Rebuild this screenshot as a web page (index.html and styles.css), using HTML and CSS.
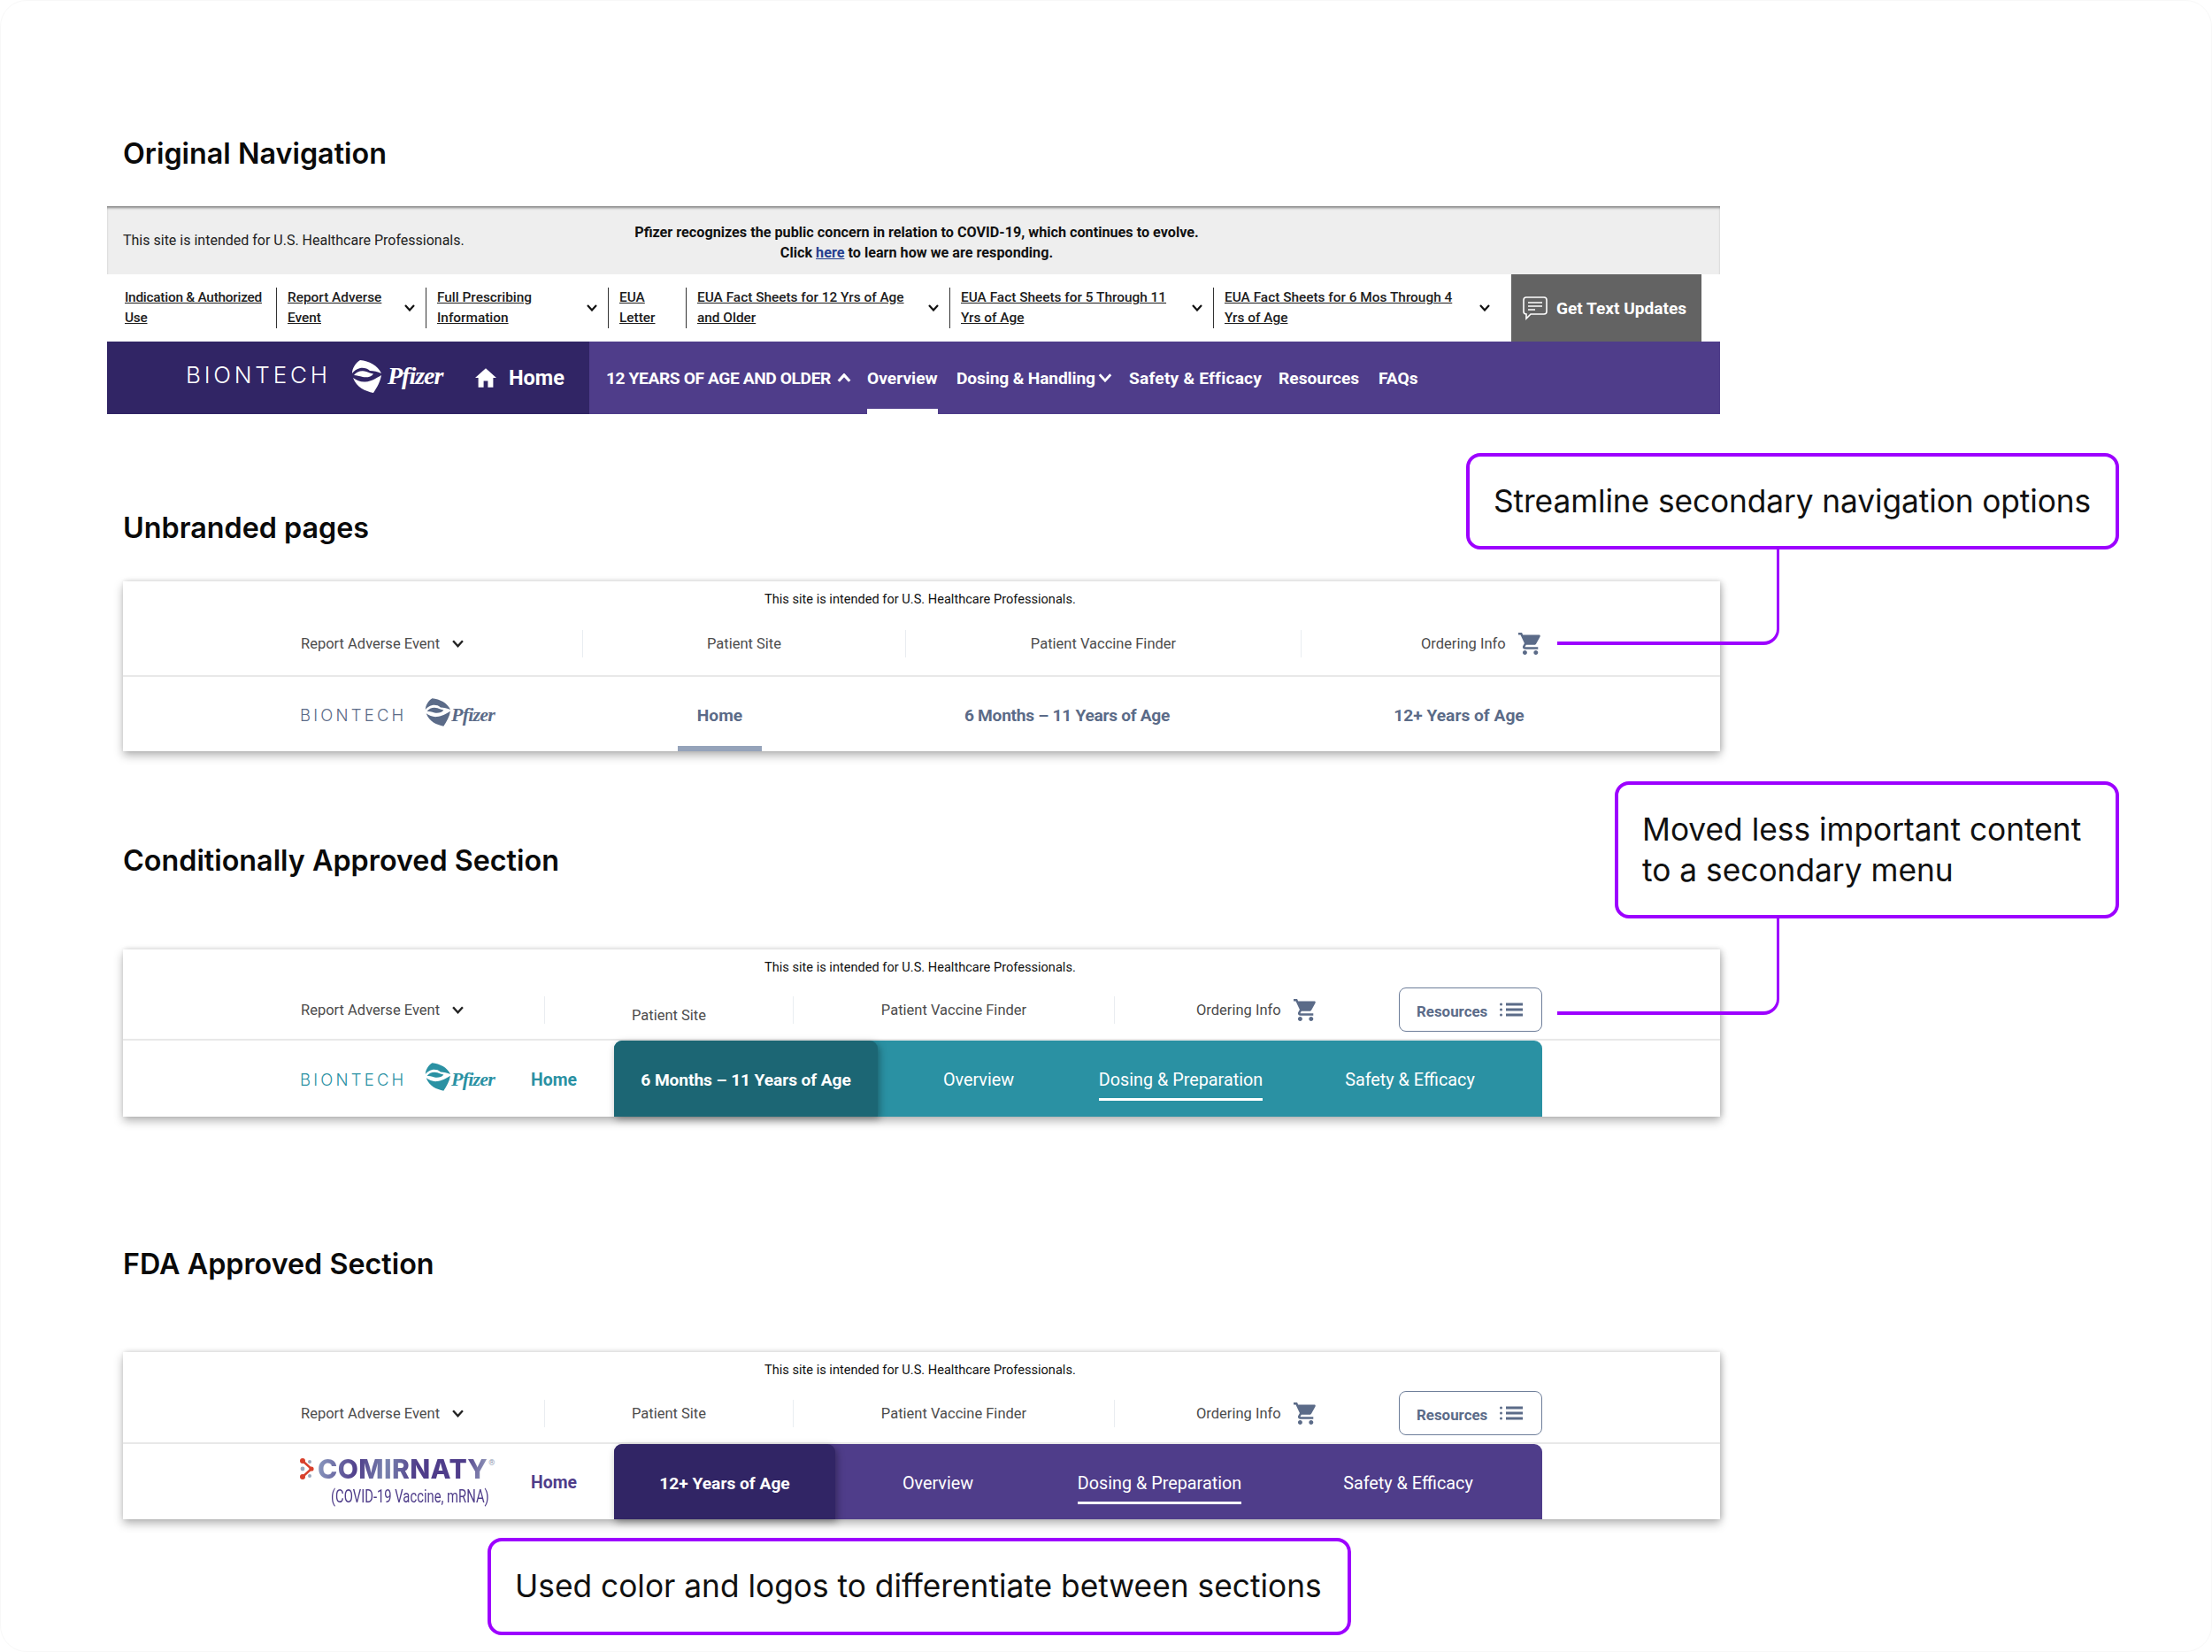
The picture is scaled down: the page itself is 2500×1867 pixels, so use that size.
FILE: index.html
```html
<!DOCTYPE html>
<html lang="en">
<head>
<meta charset="utf-8">
<title>Navigation comparison</title>
<link rel="stylesheet" href="styles.css">
</head>
<body>
<svg class="defs" width="0" height="0" aria-hidden="true">
  <symbol id="swirl" viewBox="0 0 34 37">
    <path d="M10 0C20 1 30 6 34 15C30 13 25 12 21 12C18 9 14 8.500 10 9C6 10 3 12 1 15C1 9 5 3 10 0Z"/>
    <path d="M3 17C6 13 12 11 17 13C20 14 22 15 25 15.500C23 19 17 20 13 19C9 18 6 17 3 17Z"/>
    <path d="M34 17C33 24 29 31 25 37C16 35 6 31 2 20C6 23 11 25 16 24.500C23 24 29 20 34 17Z"/>
  </symbol>
  <symbol id="cart" viewBox="1 2 21 20">
    <path d="M7 18c-1.100 0-1.990.900-1.990 2S5.900 22 7 22s2-.900 2-2-.900-2-2-2zM1 2v2h2l3.600 7.590-1.350 2.450c-.160.280-.250.610-.250.960 0 1.100.900 2 2 2h12v-2H7.420c-.140 0-.250-.110-.250-.250l.030-.120.900-1.630h7.450c.750 0 1.410-.410 1.750-1.030l3.580-6.490c.080-.140.120-.310.120-.480 0-.550-.450-1-1-1H5.210l-.940-2H1zm16 16c-1.100 0-1.990.900-1.990 2s.890 2 1.990 2 2-.900 2-2-.900-2-2-2z"/>
  </symbol>
  <symbol id="list" viewBox="0 0 26 16">
    <circle cx="1.500" cy="2" r="1.500"/><circle cx="1.500" cy="8" r="1.500"/><circle cx="1.500" cy="14" r="1.500"/>
    <rect x="7" y="0.500" width="19" height="3"/><rect x="7" y="6.500" width="19" height="3"/><rect x="7" y="12.500" width="19" height="3"/>
  </symbol>
  <symbol id="chev" viewBox="0 0 12 8">
    <polyline points="1,1 6,6.500 11,1" fill="none" stroke="currentColor" stroke-width="2.200"/>
  </symbol>
  <symbol id="chev-up" viewBox="0 0 12 8">
    <polyline points="1,7 6,1.500 11,7" fill="none" stroke="currentColor" stroke-width="2.600"/>
  </symbol>
</svg>

<main class="page">
  <h2 class="title title-first">Original Navigation</h2>
  <section class="orig">
    <div class="orig-top">
      <p class="orig-intended">This site is intended for U.S. Healthcare Professionals.</p>
      <p class="orig-alert">Pfizer recognizes the public concern in relation to COVID-19, which continues to evolve.<br>Click <a class="orig-here">here</a> to learn how we are responding.</p>
    </div>
    <div class="orig-links">
      <div class="olink olink-first"><a>Indication &amp; Authorized<br>Use</a></div>
      <div class="olink"><a>Report Adverse<br>Event</a><svg class="olink-chev"><use href="#chev"/></svg></div>
      <div class="olink"><a>Full Prescribing<br>Information</a><svg class="olink-chev"><use href="#chev"/></svg></div>
      <div class="olink"><a>EUA<br>Letter</a></div>
      <div class="olink"><a>EUA Fact Sheets for 12 Yrs of Age<br>and Older</a><svg class="olink-chev"><use href="#chev"/></svg></div>
      <div class="olink"><a>EUA Fact Sheets for 5 Through 11<br>Yrs of Age</a><svg class="olink-chev"><use href="#chev"/></svg></div>
      <div class="olink olink-last"><a>EUA Fact Sheets for 6 Mos Through 4<br>Yrs of Age</a><svg class="olink-chev"><use href="#chev"/></svg></div>
      <div class="otext">
        <svg class="otext-icon" viewBox="0 0 28 28" fill="none" stroke="currentColor" stroke-width="1.600"><path d="M4 2h20a3 3 0 0 1 3 3v13a3 3 0 0 1-3 3H9l-5 5v-5a3 3 0 0 1-3-3V5a3 3 0 0 1 3-3z"/><path d="M6 8h16M6 12h16M6 16h8"/></svg>
        <span>Get Text Updates</span>
      </div>
    </div>
    <div class="orig-main">
      <div class="orig-brand">
        <span class="bio bio-lg">BIONTECH</span>
        <svg class="swirl-lg"><use href="#swirl"/></svg>
        <span class="pfizer pfizer-lg">Pfizer</span>
        <svg class="home-icon" viewBox="2 3 20 18"><path d="M12 3 2 12h3v9h5v-6h4v6h5v-9h3z"/></svg>
        <span class="orig-home">Home</span>
      </div>
      <nav class="orig-nav">
        <span class="onav-item onav-caps">12 YEARS OF AGE AND OLDER<svg class="onav-chev"><use href="#chev-up"/></svg></span>
        <span class="onav-item onav-on">Overview</span>
        <span class="onav-item onav-dose">Dosing &amp; Handling<svg class="onav-chev"><use href="#chev"/></svg></span>
        <span class="onav-item onav-safety">Safety &amp; Efficacy</span>
        <span class="onav-item">Resources</span>
        <span class="onav-item">FAQs</span>
      </nav>
    </div>
  </section>

  <h2 class="title title-unbranded">Unbranded pages</h2>
  <section class="card card-unbranded">
    <p class="notice">This site is intended for U.S. Healthcare Professionals.</p>
    <div class="util util-unbranded">
      <div class="ucell ucell-report">Report Adverse Event<svg class="ucell-chev"><use href="#chev"/></svg></div>
      <div class="ucell ucell-mid">Patient Site</div>
      <div class="ucell ucell-mid">Patient Vaccine Finder</div>
      <div class="ucell ucell-order">Ordering Info<svg class="cart"><use href="#cart"/></svg></div>
    </div>
    <div class="main main-unbranded">
      <div class="logo">
        <span class="bio bio-sm">BIONTECH</span>
        <svg class="swirl-sm"><use href="#swirl"/></svg>
        <span class="pfizer pfizer-sm">Pfizer</span>
      </div>
      <span class="ub-link ub-home">Home</span>
      <span class="ub-link ub-long">6 Months – 11 Years of Age</span>
      <span class="ub-link">12+ Years of Age</span>
    </div>
  </section>

  <h2 class="title title-cond">Conditionally Approved Section</h2>
  <section class="card card-sub">
    <p class="notice">This site is intended for U.S. Healthcare Professionals.</p>
    <div class="util util-sub">
      <div class="ucell ucell-report">Report Adverse Event<svg class="ucell-chev"><use href="#chev"/></svg></div>
      <div class="ucell ucell-mid ucell-low">Patient Site</div>
      <div class="ucell ucell-mid">Patient Vaccine Finder</div>
      <div class="ucell ucell-order-sub">Ordering Info<svg class="cart"><use href="#cart"/></svg></div>
      <div class="res">Resources<svg class="res-icon"><use href="#list"/></svg></div>
    </div>
    <div class="main main-sub teal">
      <div class="logo logo-sub">
        <span class="bio bio-sm">BIONTECH</span>
        <svg class="swirl-sm"><use href="#swirl"/></svg>
        <span class="pfizer pfizer-sm">Pfizer</span>
      </div>
      <span class="sub-home">Home</span>
      <nav class="bar bar-teal">
        <span class="tab tab-active">6 Months – 11 Years of Age</span>
        <span class="tab">Overview</span>
        <span class="tab"><span class="tab-on">Dosing &amp; Preparation</span></span>
        <span class="tab">Safety &amp; Efficacy</span>
      </nav>
    </div>
  </section>

  <h2 class="title title-fda">FDA Approved Section</h2>
  <section class="card card-sub card-fda">
    <p class="notice">This site is intended for U.S. Healthcare Professionals.</p>
    <div class="util util-sub">
      <div class="ucell ucell-report">Report Adverse Event<svg class="ucell-chev"><use href="#chev"/></svg></div>
      <div class="ucell ucell-mid">Patient Site</div>
      <div class="ucell ucell-mid">Patient Vaccine Finder</div>
      <div class="ucell ucell-order-sub">Ordering Info<svg class="cart"><use href="#cart"/></svg></div>
      <div class="res">Resources<svg class="res-icon"><use href="#list"/></svg></div>
    </div>
    <div class="main main-sub purple">
      <div class="cmr">
        <div class="cmr-top">
          <svg class="cmr-icon" viewBox="0 0 16 24">
            <path d="M3 3 13 12 3 21" fill="none" stroke="#d8402c" stroke-width="2.400"/>
            <circle cx="3" cy="3" r="3" fill="#d8402c"/><circle cx="3" cy="21" r="3" fill="#d8402c"/><circle cx="13" cy="12" r="2.600" fill="#d8402c"/>
            <circle cx="11" cy="4" r="2" fill="#9aa8bd"/><circle cx="3" cy="12" r="2.400" fill="#9aa8bd"/><circle cx="11" cy="20" r="2" fill="#9aa8bd"/>
          </svg>
          <span class="cmr-name">COMIRNATY</span><span class="cmr-reg">®</span>
        </div>
        <span class="cmr-sub">(COVID-19 Vaccine, mRNA)</span>
      </div>
      <span class="sub-home">Home</span>
      <nav class="bar bar-purple">
        <span class="tab tab-active">12+ Years of Age</span>
        <span class="tab">Overview</span>
        <span class="tab"><span class="tab-on">Dosing &amp; Preparation</span></span>
        <span class="tab">Safety &amp; Efficacy</span>
      </nav>
    </div>
  </section>

  <div class="callout callout-stream">Streamline secondary navigation options</div>
  <div class="callout callout-moved">Moved less important content<br>to a secondary menu</div>
  <div class="callout callout-color">Used color and logos to differentiate between sections</div>
  <div class="conn conn-stream"></div>
  <div class="conn conn-moved"></div>
</main>
</body>
</html>
```

FILE: styles.css
```css
* { box-sizing: border-box; }
html, body { margin: 0; background: #fff; }
.defs { position: absolute; }
p, h2 { margin: 0; }
svg { display: block; fill: currentColor; }

.page {
  position: relative;
  width: 2500px;
  height: 1867px;
  padding-top: 153px;
  border: 1px solid #f8f8f8;
  border-radius: 30px;
  overflow: hidden;
  font-family: Roboto, "Liberation Sans", sans-serif;
  color: #000;
}

.title {
  margin-left: 138px;
  font: 600 32.300px/40px Inter, "Liberation Sans", sans-serif;
  color: #0a0a0a;
}
.title-first { margin-bottom: 39px; }
.title-unbranded { margin-top: 109px; margin-bottom: 40px; }
.title-cond { margin-top: 104px; margin-bottom: 80px; }
.title-fda { margin-top: 147px; margin-bottom: 79px; }

/* original navigation */
.orig { margin-left: 120px; width: 1823px; }
.orig-top {
  display: grid;
  grid-template-columns: 591px 638px;
  align-items: center;
  height: 77px;
  padding-left: 18px;
  background: #eeeeee;
  box-shadow: inset 0 3px 3px -1px rgba(0, 0, 0, .45);
}
.orig-intended { font-size: 16px; color: #222; white-space: nowrap; }
.orig-alert {
  margin-left: -26px;
  padding-top: 5px;
  font-size: 16.200px;
  line-height: 23px;
  font-weight: 700;
  text-align: center;
  white-space: nowrap;
  color: #111;
}
.orig-here { color: #26408f; text-decoration: underline; }

.orig-links {
  display: grid;
  grid-template-columns: 191px 169px 206px 88px 298px 298px 337px 215px 21px;
  align-items: center;
  height: 76px;
}
.olink {
  display: flex;
  align-items: center;
  justify-content: space-between;
  height: 46px;
  padding: 0 12px;
  border-left: 1.500px solid #333;
  font-size: 15.400px;
  line-height: 23px;
  font-weight: 500;
  color: #1c1c1c;
  white-space: nowrap;
}
.olink a { text-decoration: underline; }
.olink-first { padding-left: 20px; border-left: 0; letter-spacing: -.25px; }
.olink-last { padding-right: 24px; }
.olink-chev { width: 12px; height: 8px; flex: none; color: #111; }
.otext {
  display: flex;
  align-items: center;
  gap: 10px;
  align-self: stretch;
  padding-left: 13px;
  background: #636363;
  color: #fff;
  font-size: 19.100px;
  font-weight: 700;
  white-space: nowrap;
}
.otext-icon { width: 28px; height: 28px; fill: none; flex: none; }

.orig-main { display: flex; height: 82px; }
.orig-brand {
  display: grid;
  grid-template-columns: 187px 41px 99px 38px auto;
  align-items: center;
  width: 545px;
  padding-left: 89px;
  background: #312565;
  color: #fff;
}
.bio { font-family: Inter, "Liberation Sans", sans-serif; font-weight: 300; white-space: nowrap; line-height: 1; }
.bio-lg { font-size: 26px; letter-spacing: 3.800px; margin-top: -7px; }
.bio-sm { font-size: 18.500px; letter-spacing: 3.200px; margin-top: 3px; }
.pfizer { font-family: "Liberation Serif", serif; font-style: italic; font-weight: 700; white-space: nowrap; line-height: 1; }
.pfizer-lg { font-size: 28px; letter-spacing: -1px; margin-top: -4px; }
.pfizer-sm { font-size: 22px; letter-spacing: -.8px; margin-top: 2px; }
.swirl-lg { width: 34px; height: 37px; margin-top: -4px; }
.swirl-sm { width: 29px; height: 32px; margin-top: -4px; }
.home-icon { width: 24px; height: 24px; }
.orig-home { font-size: 23.500px; font-weight: 700; }
.orig-nav {
  display: grid;
  grid-template-columns: 295px 101px 195px 169px 113px auto;
  flex: 1;
  padding-left: 19px;
  background: #4f3d8a;
  color: #fff;
  font-size: 19.200px;
  font-weight: 700;
  white-space: nowrap;
}
.onav-item { display: flex; align-items: center; gap: 7px; }
.onav-caps { letter-spacing: -.4px; }
.onav-dose { gap: 3px; letter-spacing: -.15px; }
.onav-safety { letter-spacing: .2px; }
.onav-chev { width: 16px; height: 10px; }
.onav-on { width: 80px; border-bottom: 6px solid #fff; border-top: 6px solid transparent; }

/* redesign cards */
.card {
  display: flex;
  flex-direction: column;
  margin-left: 138px;
  width: 1805px;
  background: #fff;
  box-shadow: 0 5px 10px rgba(0, 0, 0, .28), 3px 0 6px rgba(0, 0, 0, .1), 0 -1px 4px rgba(0, 0, 0, .05);
}
.card-unbranded { height: 192px; }
.card-sub { height: 189px; }
.notice { height: 41px; padding-left: 725px; font-size: 14.600px; line-height: 41px; color: #111; white-space: nowrap; }
.util {
  display: grid;
  align-items: start;
  border-bottom: 2px solid #e8e8e8;
  font-size: 16.500px;
  color: #4c4c4c;
  white-space: nowrap;
}
.util-unbranded { grid-template-columns: 519px 365px 447px 406px; height: 67px; padding-top: 14px; }
.util-sub { grid-template-columns: 476px 281px 363px 322px 162px; height: 62px; padding-top: 12px; }
.card-fda .util-sub { height: 63px; padding-top: 13px; }
.ucell { display: flex; align-items: center; height: 31px; }
.ucell-report { padding-left: 201px; }
.ucell-mid { justify-content: center; border-left: 1px solid #e9edf1; }
.ucell-low { padding-top: 12px; }
.ucell-order { padding-left: 135px; border-left: 1px solid #e9edf1; }
.ucell-order-sub { padding-left: 92px; border-left: 1px solid #e9edf1; }
.ucell-chev { width: 13px; height: 9px; margin-left: 14px; color: #222; }
.cart { width: 26px; height: 25px; margin-left: 14px; color: #5b6b88; flex: none; }
.res {
  display: flex;
  align-items: center;
  justify-content: space-between;
  height: 50px;
  margin-top: -10px;
  padding: 3px 21px 0 19px;
  border: 1.500px solid #6d7d99;
  border-radius: 8px;
  color: #5b6b88;
  font-size: 16.900px;
  font-weight: 700;
}
.res-icon { width: 26px; height: 16px; margin-top: -3px; }

.main { flex: 1; display: flex; align-items: stretch; }
.logo {
  display: grid;
  grid-template-columns: 141px 30px auto;
  align-items: center;
}
.main-unbranded { display: grid; grid-template-columns: 427px 95px 690px 196px; padding-left: 200px; color: #5b6b88; }
.ub-link { display: flex; align-items: center; justify-content: center; padding-top: 2px; font-size: 19.200px; font-weight: 700; white-space: nowrap; }
.ub-long { letter-spacing: -.3px; }
.ub-home { padding-top: 9px; border-bottom: 6px solid #95a3ba; }
.main-sub { display: grid; grid-template-columns: 261px 94px 1049px; padding-left: 200px; }
.teal { color: #2a91a3; }
.purple { color: #4f3d8a; }
.sub-home { display: flex; align-items: center; padding-top: 2px; font-size: 19.400px; font-weight: 700; }
.bar { display: grid; padding-right: 5px; border-radius: 9px 9px 0 0; color: #fff; font-size: 19.800px; white-space: nowrap; }
.bar-teal { grid-template-columns: 298px 228px 229px 289px; background: #2a91a3; }
.bar-purple { grid-template-columns: 250px 232px 269px 293px; background: #4f3d8a; }
.tab { display: flex; justify-content: center; align-items: flex-start; padding-top: 30px; line-height: 30px; font-weight: 400; }
.tab-on { padding-bottom: 5px; border-bottom: 3px solid #fff; }
.tab-active { font-size: 19.200px; font-weight: 700; border-radius: 9px 9px 0 0; box-shadow: 2px 3px 8px rgba(0, 0, 0, .35); }
.bar-teal .tab-active { background: #1c6674; letter-spacing: -.1px; }
.bar-purple .tab-active { background: #312565; }

.cmr { display: flex; flex-direction: column; }
.cmr-top { display: flex; align-items: center; gap: 4px; height: 39px; padding-top: 16px; }
.cmr-icon { width: 16px; height: 24px; flex: none; }
.cmr-name {
  font: 800 30px/1 Inter, "Liberation Sans", sans-serif;
  letter-spacing: .4px;
  background: linear-gradient(100deg, #8c9cc0 0%, #4f3d8a 24%, #7b86b0 40%, #4f3d8a 58%, #4f3d8a 85%, #9aa5c0 100%);
  -webkit-background-clip: text;
  background-clip: text;
  color: transparent;
}
.cmr-reg { align-self: flex-start; margin: 0 0 0 -3px; font-size: 9px; color: #8e9ab3; }
.cmr-sub {
  margin: 10px 0 0 35px;
  font-size: 20px;
  line-height: 20px;
  white-space: nowrap;
  transform: scaleX(.74);
  transform-origin: left center;
}

/* annotations */
.callout {
  position: absolute;
  display: flex;
  align-items: center;
  border: 4px solid #9d00ff;
  border-radius: 16px;
  background: #fff;
  font: 400 35.300px/46px Inter, "Liberation Sans", sans-serif;
  color: #111;
  white-space: nowrap;
}
.callout-stream { left: 1656px; top: 511px; width: 738px; height: 109px; padding-left: 27px; letter-spacing: -.1px; }
.callout-moved { left: 1824px; top: 882px; width: 570px; height: 155px; padding-left: 27px; }
.callout-color { left: 550px; top: 1737px; width: 976px; height: 110px; padding-left: 27px; }
.conn {
  position: absolute;
  left: 1759px;
  width: 251px;
  border-right: 3px solid #9d00ff;
  border-bottom: 4px solid #9d00ff;
  border-bottom-right-radius: 18px;
}
.conn-stream { top: 619px; height: 109px; }
.conn-moved { top: 1036px; height: 110px; }
```
